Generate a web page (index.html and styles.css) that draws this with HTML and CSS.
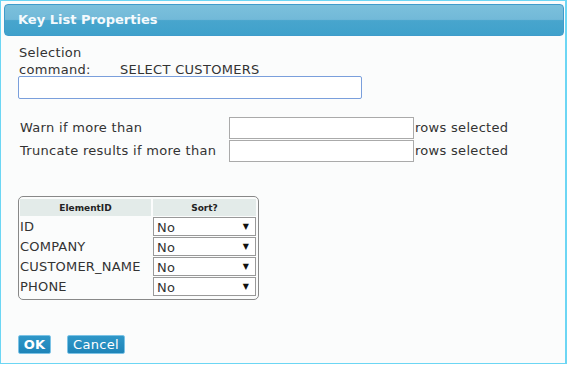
FILE: index.html
```html
<!DOCTYPE html>
<html lang="en">
<head>
    <meta charset="UTF-8">
    <title>Key List Properties</title>
    <link rel="stylesheet" href="styles.css">
</head>
<body>
    <div class="dialog">
        <div class="titlebar">Key List Properties</div>

        <div class="selection">
            <div class="sel-label">Selection<br>command:</div>
            <div class="sel-value">SELECT CUSTOMERS</div>
        </div>
        <input type="text" class="command-input">

        <div class="limits">
            <div class="limit-row">
                <span class="limit-label">Warn if more than</span>
                <input type="text" class="limit-input">
                <span>rows selected</span>
            </div>
            <div class="limit-row">
                <span class="limit-label">Truncate results if more than</span>
                <input type="text" class="limit-input">
                <span>rows selected</span>
            </div>
        </div>

        <div class="grid-box">
            <table class="keys">
                <thead>
                    <tr><th class="col-id">ElementID</th><th class="col-sort">Sort?</th></tr>
                </thead>
                <tbody>
                    <tr><td>ID</td><td><div class="sel">No<span class="arrow">&#9660;</span></div></td></tr>
                    <tr><td>COMPANY</td><td><div class="sel">No<span class="arrow">&#9660;</span></div></td></tr>
                    <tr><td>CUSTOMER_NAME</td><td><div class="sel">No<span class="arrow">&#9660;</span></div></td></tr>
                    <tr><td>PHONE</td><td><div class="sel">No<span class="arrow">&#9660;</span></div></td></tr>
                </tbody>
            </table>
        </div>

        <div class="buttons">
            <button class="btn btn-ok">OK</button>
            <button class="btn btn-cancel">Cancel</button>
        </div>
    </div>
</body>
</html>
```

FILE: styles.css
```css
html, body {
    margin: 0;
    padding: 0;
}
body {
    font-family: "DejaVu Sans", Verdana, sans-serif;
    font-size: 13px;
    letter-spacing: 0.3px;
    color: #333;
    background: #fff;
}
.dialog {
    width: 564px;
    height: 362px;
    border: 1px solid #6cd6f4;
    border-right-width: 2px;
    background: #fbfcfc;
    position: relative;
}
.titlebar {
    margin: 3px 1px 0 3px;
    height: 32px;
    border: 1px solid #3f9ccb;
    border-radius: 4px;
    background: linear-gradient(to bottom, #7bc0dc 0%, #72b9d8 48%, #48a5cd 52%, #3fa1cb 100%);
    color: #f4fafd;
    font-weight: bold;
    font-size: 13px;
    letter-spacing: 0;
    line-height: 30px;
    padding-left: 13px;
    box-sizing: border-box;
}
.selection {
    display: flex;
    align-items: flex-end;
    margin: 8px 0 0 18px;
    line-height: 17px;
}
.sel-label {
    width: 101px;
}
.command-input {
    display: block;
    margin: -2px 0 0 17px;
    width: 344px;
    height: 23px;
    border: 1px solid #7a9fdc;
    border-radius: 2px;
    box-sizing: border-box;
    background: #fff;
}
.limits {
    margin: 17px 0 0 19px;
}
.limit-row {
    display: flex;
    align-items: center;
    height: 23px;
}
.limit-label {
    width: 209px;
}
.limit-input {
    width: 185px;
    height: 22px;
    border: 1px solid #aaa;
    box-sizing: border-box;
    margin: 0 1px 0 0;
    background: #fff;
}
.grid-box {
    margin: 34px 0 0 17px;
    width: 241px;
    border: 1px solid #888;
    border-radius: 5px;
    padding: 1px 0 2px 0;
    box-sizing: border-box;
}
.keys {
    border-collapse: separate;
    border-spacing: 2px 1px;
    margin-left: -1px;
    letter-spacing: 0.2px;
}
.keys th {
    background: #e3ebe9;
    font-size: 9px;
    letter-spacing: 0;
    color: #222;
    height: 17px;
    padding: 0;
}
.col-id {
    width: 131px;
}
.col-sort {
    width: 103px;
}
.keys td {
    padding: 0;
    height: 19px;
    font-size: 13px;
    color: #333;
}
.sel {
    border: 1px solid #999;
    background: #fff;
    height: 19px;
    box-sizing: border-box;
    position: relative;
    padding-left: 3px;
    line-height: 20px;
    font-size: 13px;
}
.arrow {
    position: absolute;
    right: 6px;
    top: 0;
    font-size: 8px;
    line-height: 17px;
    color: #111;
}
.buttons {
    position: absolute;
    left: 17px;
    top: 334px;
    display: flex;
    gap: 16px;
}
.btn {
    font-family: "DejaVu Sans", Verdana, sans-serif;
    background: linear-gradient(to bottom, #2f97c8, #1e84b8);
    border: 1px solid #7cc3e6;
    border-radius: 2px;
    color: #fff;
    font-size: 13px;
    letter-spacing: 0.3px;
    height: 19px;
    padding: 0 3px;
    line-height: 16px;
}
.btn-ok {
    font-weight: bold;
    width: 33px;
}
.btn-cancel {
    width: 58px;
}
```
